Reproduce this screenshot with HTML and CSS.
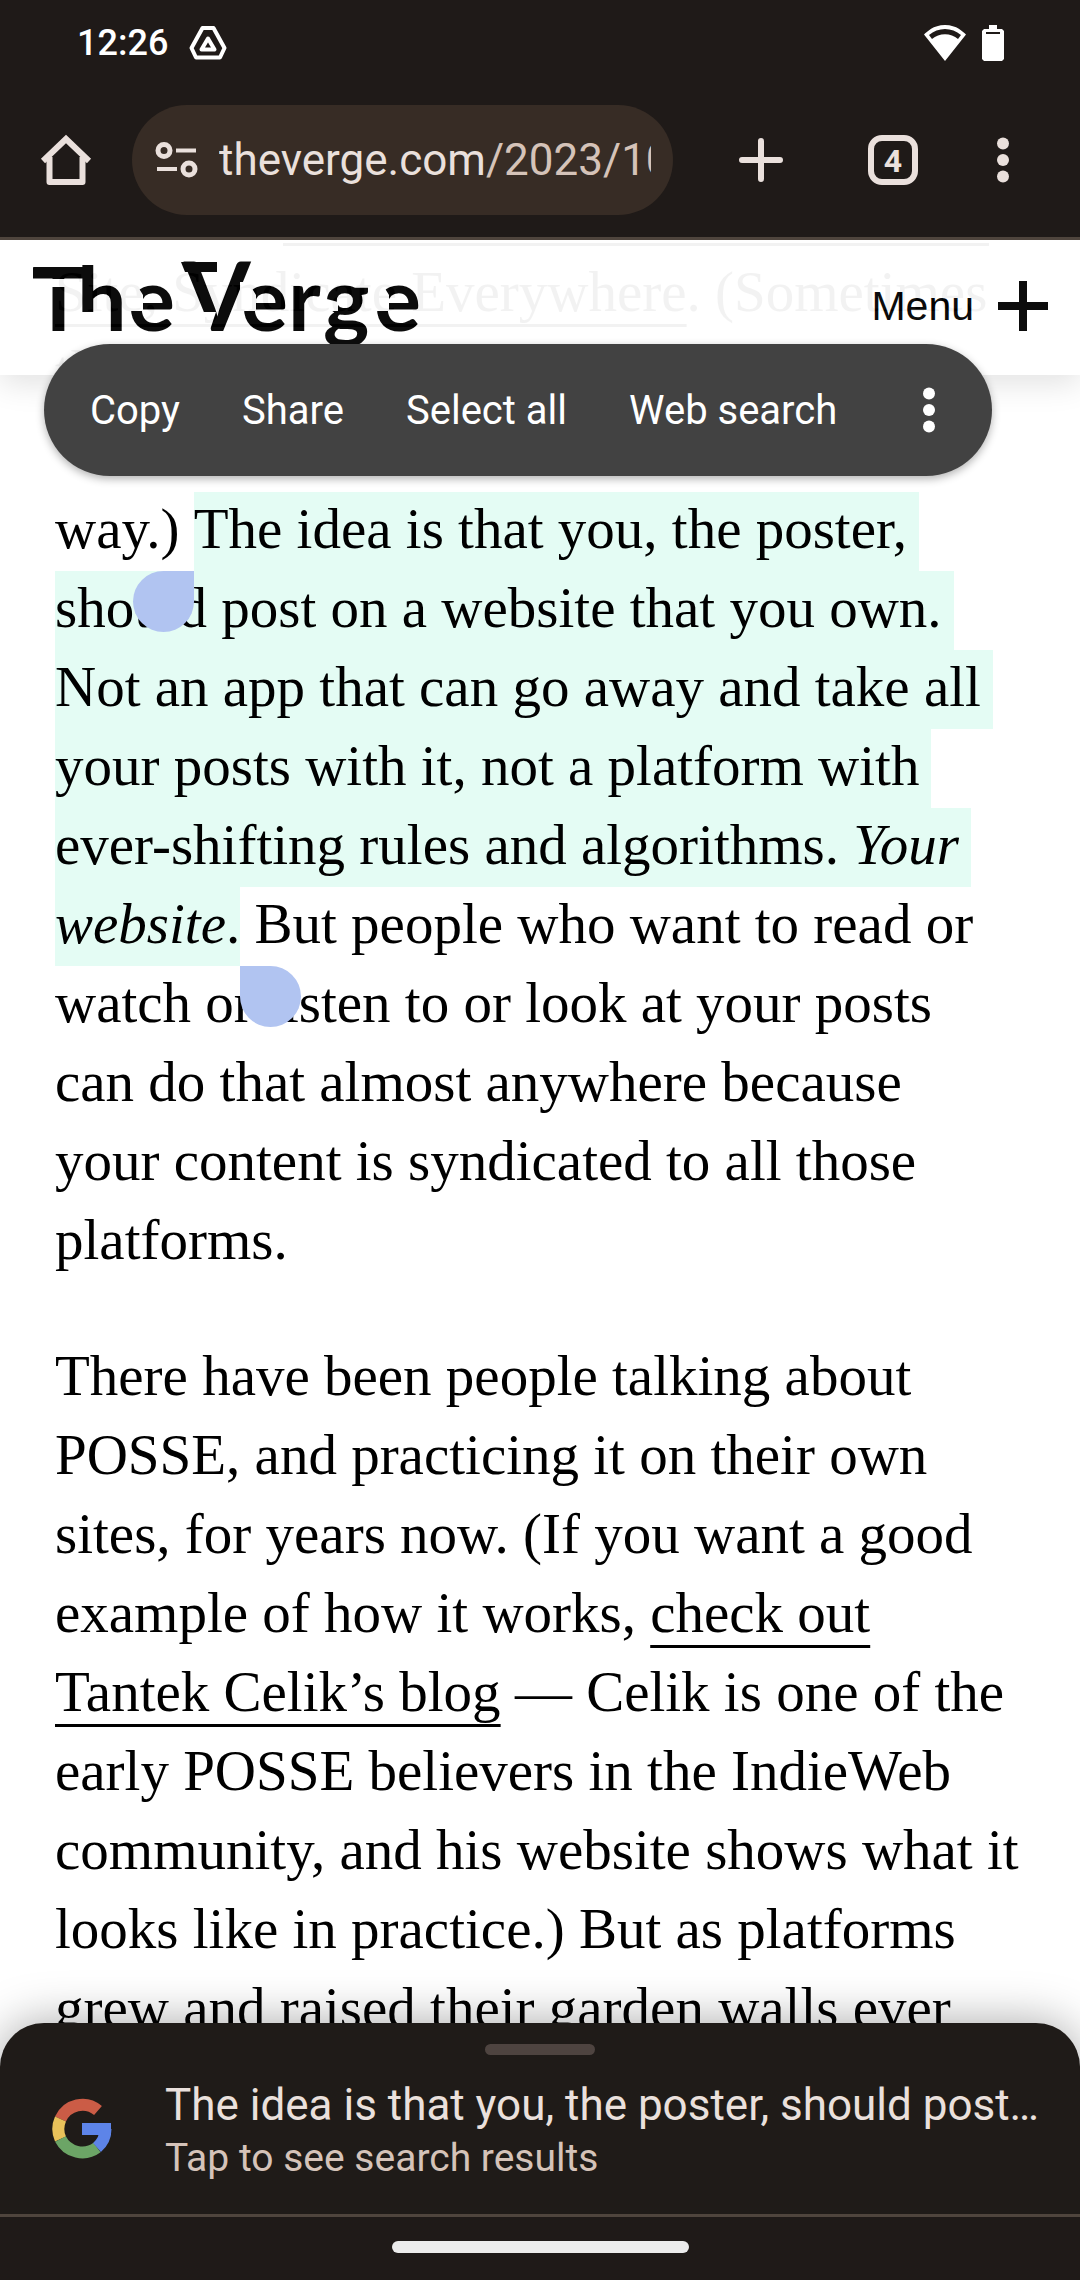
FILE: index.html
```html
<!DOCTYPE html>
<html lang="en">
<head>
<meta charset="utf-8">
<meta name="viewport" content="width=device-width, initial-scale=1">
<title>The Verge</title>
<link rel="stylesheet" href="styles.css">
</head>
<body>
<div class="status-bar">
  <time class="clock">12:26</time>
  <svg class="drive" width="38" height="36" viewBox="0 0 38 36" fill="none" stroke="#fff" stroke-width="4" stroke-linejoin="round"><path d="M13.500 3h11L35.500 23l-4.500 9.500H7L2.500 23z"/><path d="M19 13.500L25.500 24.500h-13z"/></svg>
  <span class="status-icons">
    <svg width="42" height="36" viewBox="0 0 42 36"><path fill="#fff" fill-rule="evenodd" d="M21 0C33 0 39 7 42 9.500L21 36 0 9.500C3 7 9 0 21 0zM5 10l3 4C15 7.500 27 7.500 34 14l3-4C28 2 14 2 5 10z"/></svg>
    <svg width="22" height="36" viewBox="0 0 22 36"><path fill="#fff" d="M7 0h8v4h5l2 2v28l-2 2H2l-2-2V6l2-2h5z"/><path stroke="#1f1a18" stroke-width="2" d="M4 8h14"/></svg>
  </span>
</div>

<div class="toolbar">
  <button class="tool" aria-label="Home"><svg width="50" height="50" viewBox="0 0 50 50" fill="none" stroke="#eae0dc" stroke-width="6" stroke-linejoin="round"><path d="M2 26L25 4l23 22" stroke-linejoin="miter"/><path d="M8.500 22v25h33V22"/></svg></button>
  <div class="address">
    <svg width="41" height="36" viewBox="0 0 41 36" fill="none" stroke="#eae0dc" stroke-width="5"><circle cx="8" cy="8.500" r="6"/><path d="M20 8.500h20M1 27h20" stroke-width="4"/><circle cx="33" cy="27" r="6"/></svg>
    <a class="url" href="#article">theverge.com<span class="path">/2023/10</span></a>
  </div>
  <button class="tool" aria-label="New tab"><svg width="44" height="44" viewBox="0 0 44 44" stroke="#eae0dc" stroke-width="6" stroke-linecap="round"><path d="M22 3v38M3 22h38"/></svg></button>
  <button class="tool" aria-label="Tabs"><span class="tab-count">4</span></button>
  <button class="tool narrow" aria-label="More"><svg width="12" height="46" viewBox="0 0 12 46" fill="#eae0dc"><circle cx="6" cy="6.500" r="6"/><circle cx="6" cy="23" r="6"/><circle cx="6" cy="39.500" r="6"/></svg></button>
</div>

<main class="page">
  <article class="article" id="article">
    <div class="rule"></div>
    <p><a href="#posse">Site, Syndicate Everywhere</a>. (Sometimes<br>
    the P stands for “Post” and the E can be<br>
    “Elsewhere.” The idea is the same<br>
    way.) <mark><span class="anchor"><i class="handle start"></i></span>The idea is that you, the poster,<br>
    should post on a website that you own.<br>
    Not an app that can go away and take all<br>
    your posts with it, not a platform with<br>
    ever-shifting rules and algorithms. <em>Your</em></mark><br>
    <mark class="last"><em>website</em>.<span class="anchor"><i class="handle end"></i></span></mark> But people who want to read or<br>
    watch or listen to or look at your posts<br>
    can do that almost anywhere because<br>
    your content is syndicated to all those<br>
    platforms.</p>
    <p>There have been people talking about<br>
    POSSE, and practicing it on their own<br>
    sites, for years now. (If you want a good<br>
    example of how it works, <a href="#blog">check out<br>
    Tantek Celik’s blog</a> — Celik is one of the<br>
    early POSSE believers in the IndieWeb<br>
    community, and his website shows what it<br>
    looks like in practice.) But as platforms<br>
    grew and raised their garden walls ever</p>
  </article>

  <header class="site-header">
    <svg class="logo" width="392" height="110" viewBox="0 0 392 110" role="img" aria-label="The Verge">
      <g fill="#000" class="wordmark">
        <text y="79" x="2 47 98">The</text>
        <text y="79" x="154" class="big">V</text>
        <text y="79" x="211 258 293 344">erge</text>
        <path d="M3 15.500h60v11H3zM151 10h36v10h-32z"/>
      </g>
      <g fill="#fff">
        <path d="M16 27h22v8H16zM52 60h12v22H52z"/>
        <path d="M97 30h8l8 13v16H97zM210 30h8l8 13v16H210zM343 30h8l8 13v16H343zM293 46l15 4v9h-15z"/>
        <path d="M165 60h21l-7 21h-14z"/>
      </g>
    </svg>
    <button class="menu">Menu
      <svg width="50" height="50" viewBox="0 0 50 50" stroke="#000" stroke-width="8"><path d="M25 0v50M0 25h50"/></svg>
    </button>
  </header>

  <div class="actions" role="toolbar">
    <button>Copy</button>
    <button>Share</button>
    <button>Select all</button>
    <button>Web search</button>
    <button class="overflow" aria-label="More"><svg width="12" height="46" viewBox="0 0 12 46" fill="#fff"><circle cx="6" cy="6.500" r="6"/><circle cx="6" cy="23" r="6"/><circle cx="6" cy="39.500" r="6"/></svg></button>
  </div>
</main>

<section class="sheet">
  <div class="grip"></div>
  <a class="result" href="#results">
    <svg width="60" height="62" viewBox="0 0 60 62" fill="none" stroke-width="12"><path stroke="#cb5c46" d="M46 12.500A24 24 0 0 0 8.500 21"/><path stroke="#e9c25a" d="M8.500 21A24.500 24.500 0 0 0 8.500 41"/><path stroke="#6ca566" d="M8.500 41A24.500 24.500 0 0 0 45 49.500"/><path stroke="#5d84e8" d="M45 49.500A24.500 24.500 0 0 0 53.500 31"/><path fill="#5d84e8" d="M30 25h29v12H30z"/></svg>
    <span class="texts"><span class="title">The idea is that you, the poster, should post…</span><span class="sub">Tap to see search results</span></span>
  </a>
</section>
<div class="nav-bar"><div class="pill"></div></div>
</body>
</html>
```
FILE: styles.css
```css
* { box-sizing: border-box; }
body {
  margin: 0;
  height: 100vh;
  display: flex;
  flex-direction: column;
  overflow: hidden;
  background: #1f1a18;
  font-family: Roboto, "Liberation Sans", sans-serif;
}
svg { display: block; flex: none; overflow: visible; }
button { border: 0; padding: 0; background: none; color: inherit; font: inherit; }
a { color: inherit; text-decoration: none; }

.status-bar {
  flex: none;
  height: 86px;
  padding: 0 76px 0 77px;
  display: flex;
  align-items: center;
  color: #fff;
}
.clock { font-size: 36px; font-weight: 500; margin-right: 21px; }
.status-icons { margin-left: auto; display: flex; gap: 16px; }

.toolbar {
  flex: none;
  display: flex;
  align-items: center;
  padding: 19px 33px 22px 0;
  border-bottom: 3px solid #4f453d;
  color: #eae0dc;
}
.tool { width: 132px; height: 110px; display: flex; align-items: center; justify-content: center; }
.tool.narrow { width: 88px; }
.address {
  flex: 1;
  min-width: 0;
  height: 110px;
  margin-right: 22px;
  padding: 0 22px 0 24px;
  display: flex;
  align-items: center;
  gap: 22px;
  border-radius: 55px;
  background: #372c25;
}
.url { flex: 1; min-width: 0; overflow: hidden; white-space: nowrap; font-size: 44px; line-height: 60px; }
.url .path { color: #d5c3b9; }
.tab-count {
  width: 50px;
  height: 50px;
  border: 6px solid #eae0dc;
  border-radius: 14px;
  font-size: 32px;
  font-weight: 700;
  line-height: 40px;
}

.page { flex: 1; min-height: 0; position: relative; overflow: hidden; background: #fff; color: #000; }
.article {
  padding: 3px 40px 0 55px;
  font-family: "Liberation Serif", serif;
  font-size: 57px;
  line-height: 79px;
  white-space: nowrap;
}
.article p { margin: 0 0 57px; }
.article p a {
  text-decoration: underline;
  text-decoration-thickness: 3px;
  text-underline-offset: 13px;
  text-decoration-skip-ink: none;
}
.rule { height: 3px; margin: 0 51px 6px 228px; background: #000; }
mark {
  color: inherit;
  background: #e4fcf4;
  padding: 5px 12px 11px 0;
  -webkit-box-decoration-break: clone;
  box-decoration-break: clone;
}
mark.last { padding-right: 0; }
.anchor { position: relative; }
.handle { position: absolute; top: 74px; width: 61px; height: 61px; background: #b1c4f1; }
.handle.start { right: 0; border-radius: 50% 0 50% 50%; }
.handle.end { left: 0; border-radius: 0 50% 50% 50%; }

.site-header {
  position: absolute;
  top: 0;
  left: 0;
  right: 0;
  height: 135px;
  padding: 12px 32px 0 30px;
  display: flex;
  justify-content: space-between;
  align-items: flex-start;
  background: #fff;
  opacity: 0.95;
  box-shadow: 0 8px 30px rgba(0, 0, 0, 0.12);
}
.wordmark { font-family: Lato, sans-serif; font-size: 88px; font-weight: 700; }
.wordmark .big { font-size: 96px; }
.menu {
  display: flex;
  align-items: center;
  gap: 24px;
  margin-top: 29px;
  font-family: "Liberation Sans", sans-serif;
  font-size: 41px;
  line-height: 50px;
}

.actions {
  position: absolute;
  top: 104px;
  left: 44px;
  height: 132px;
  padding: 0 57px 0 15px;
  display: flex;
  align-items: center;
  border-radius: 66px;
  background: #424242;
  color: #fff;
  font-size: 40px;
  box-shadow: 0 3px 8px rgba(0, 0, 0, 0.3);
}
.actions button { height: 132px; padding: 0 31px; white-space: nowrap; }
.actions .overflow { padding: 0 0 0 55px; }

.sheet {
  flex: none;
  position: relative;
  margin-top: -44px;
  height: 191px;
  padding-top: 21px;
  border-radius: 44px 44px 0 0;
  background: #1f1b18;
  box-shadow: 0 0 48px rgba(0, 0, 0, 0.35);
}
.grip { width: 110px; height: 11px; margin: 0 auto; border-radius: 6px; background: #4e4440; }
.result { display: flex; align-items: center; gap: 53px; padding: 21px 32px 0 52px; }
.texts { flex: 1; min-width: 0; display: flex; flex-direction: column; }
.title { overflow: hidden; white-space: nowrap; text-overflow: ellipsis; font-size: 44px; line-height: 58px; color: #eae0dc; }
.sub { font-size: 39px; line-height: 48px; color: #d5c3b9; }
.nav-bar { flex: none; position: relative; height: 66px; padding-top: 24px; border-top: 3px solid #4f453d; background: #1f1a18; }
.pill { width: 297px; height: 12px; margin: 0 auto; border-radius: 6px; background: #ececec; }
```
